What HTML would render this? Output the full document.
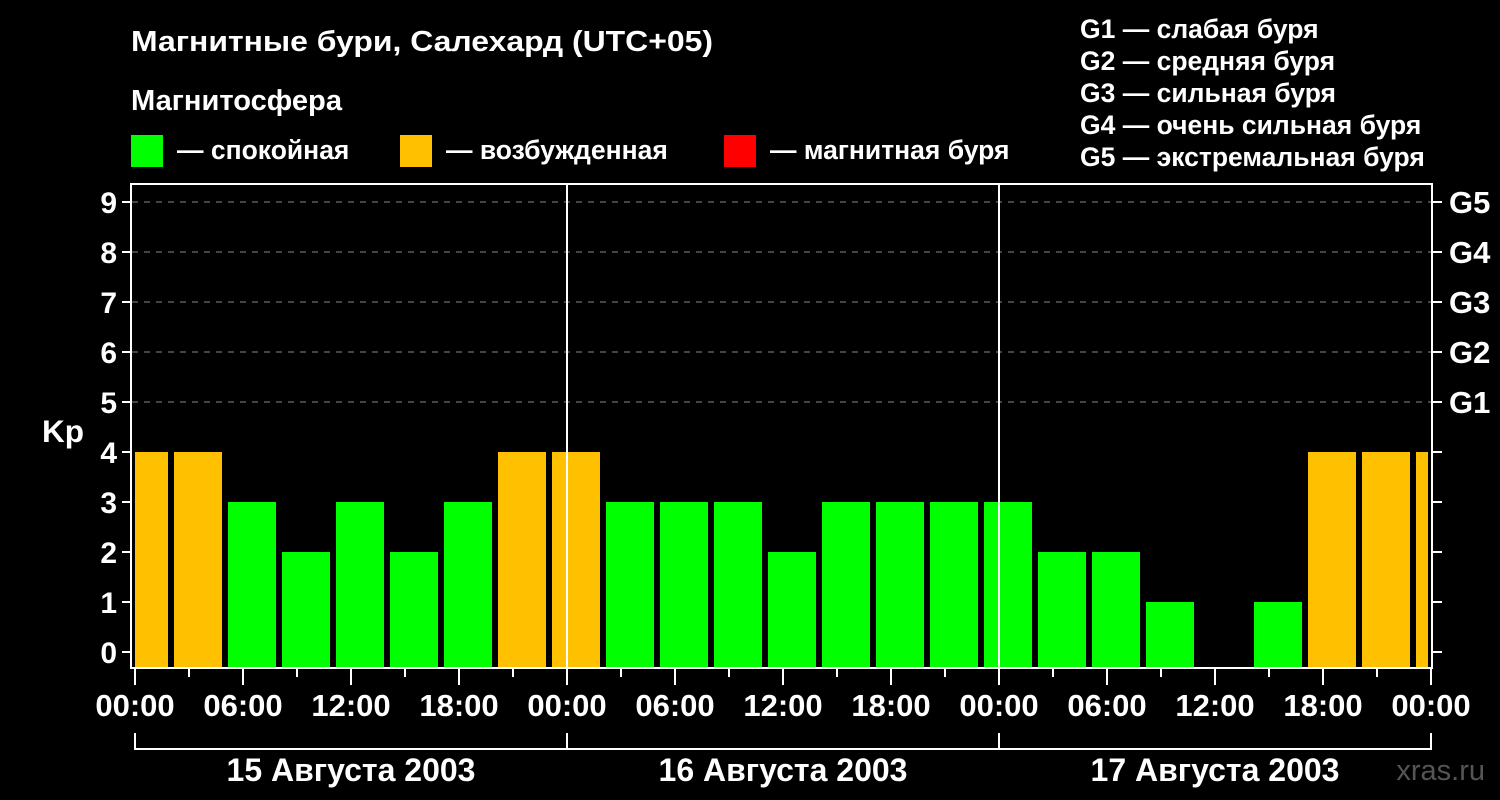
<!DOCTYPE html><html><head><meta charset="utf-8"><style>html,body{margin:0;background:#000;width:1500px;height:800px;overflow:hidden}</style></head><body>
<svg width="1500" height="800" xmlns="http://www.w3.org/2000/svg" font-family="Liberation Sans, sans-serif" font-weight="bold" fill="#fff">
<rect width="1500" height="800" fill="#000"/>
<text x="131" y="51" font-size="29" textLength="582" lengthAdjust="spacingAndGlyphs">Магнитные бури, Салехард (UTC+05)</text>
<text x="131" y="110" font-size="29" textLength="211" lengthAdjust="spacingAndGlyphs">Магнитосфера</text>
<rect x="131" y="135" width="32" height="32" fill="#00ff00"/><text x="177" y="159" font-size="26.5">— спокойная</text>
<rect x="400" y="135" width="32" height="32" fill="#ffc000"/><text x="446" y="159" font-size="26.5">— возбужденная</text>
<rect x="724" y="135" width="32" height="32" fill="#ff0000"/><text x="770" y="159" font-size="26.5">— магнитная буря</text>
<g font-size="26.5"><text x="1080" y="38">G1 — слабая буря</text><text x="1080" y="70">G2 — средняя буря</text><text x="1080" y="102">G3 — сильная буря</text><text x="1080" y="134">G4 — очень сильная буря</text><text x="1080" y="166">G5 — экстремальная буря</text></g>
<g stroke="#888" stroke-dasharray="6,6" stroke-width="1"><line x1="132" y1="202" x2="1431" y2="202"/><line x1="132" y1="252" x2="1431" y2="252"/><line x1="132" y1="302" x2="1431" y2="302"/><line x1="132" y1="352" x2="1431" y2="352"/><line x1="132" y1="402" x2="1431" y2="402"/></g>
<g id="bars"></g>
<g stroke="#fff" stroke-width="2" fill="none">
<rect x="131" y="184" width="1301" height="484"/>
<line x1="567" y1="184" x2="567" y2="668"/><line x1="999" y1="184" x2="999" y2="668"/>
<path d="M122 202h9M122 252h9M122 302h9M122 352h9M122 402h9M122 452h9M122 502h9M122 552h9M122 602h9M122 652h9"/>
<path d="M1432 202h10M1432 252h10M1432 302h10M1432 352h10M1432 402h10M1432 452h10M1432 502h10M1432 552h10M1432 602h10M1432 652h10"/>
<path d="M135 733v16h1296v-16M567 733v16M999 733v16"/>
</g>
<g font-size="30" text-anchor="end"><text x="117" y="213">9</text><text x="117" y="263">8</text><text x="117" y="313">7</text><text x="117" y="363">6</text><text x="117" y="413">5</text><text x="117" y="463">4</text><text x="117" y="513">3</text><text x="117" y="563">2</text><text x="117" y="613">1</text><text x="117" y="663">0</text></g>
<text x="42" y="442" font-size="31.5">Kp</text>
<g font-size="31"><text x="1449" y="213">G5</text><text x="1449" y="263">G4</text><text x="1449" y="313">G3</text><text x="1449" y="363">G2</text><text x="1449" y="413">G1</text></g>
<g id="xt" font-size="31" text-anchor="middle"></g>
<g font-size="32" text-anchor="middle"><text x="351" y="781">15 Августа 2003</text><text x="783" y="781">16 Августа 2003</text><text x="1215" y="781">17 Августа 2003</text></g>
<text x="1485" y="780" font-size="29" fill="#555" text-anchor="end" font-weight="normal">xras.ru</text>
<script>
var v=[4,4,3,2,3,2,3,4,4,3,3,3,2,3,3,3,3,2,2,1,0,1,4,4,4],ns='http://www.w3.org/2000/svg';
var g=document.getElementById('bars');
v.forEach(function(k,i){if(!k)return;var x=120+54*i,w=48;if(x<135){w-=135-x;x=135}if(x+w>1428)w=1428-x;var r=document.createElementNS(ns,'rect');r.setAttribute('x',x);r.setAttribute('y',652-50*k);r.setAttribute('width',w);r.setAttribute('height',668-(652-50*k));r.setAttribute('fill',k>=4?'#ffc000':'#00ff00');g.appendChild(r);});
var xt=document.getElementById('xt'),lab=['00:00','06:00','12:00','18:00'];
for(var h=0;h<=72;h+=3){var x=135+18*h,l=document.createElementNS(ns,'line');l.setAttribute('x1',x);l.setAttribute('x2',x);l.setAttribute('y1',668);l.setAttribute('y2',h%6?677:685);l.setAttribute('stroke','#fff');l.setAttribute('stroke-width',2);xt.appendChild(l);
if(h%6==0){var t=document.createElementNS(ns,'text');t.setAttribute('x',x);t.setAttribute('y',716);t.textContent=lab[(h/6)%4];xt.appendChild(t);}}
</script>
</svg></body></html>
